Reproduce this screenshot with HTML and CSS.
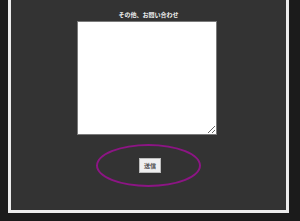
FILE: index.html
```html
<!DOCTYPE html>
<html lang="ja">
<head>
<meta charset="utf-8">
<link rel="stylesheet" href="styles.css">
</head>
<body>
<div class="panel">
  <h2 class="title">その他、お問い合わせ</h2>
  <textarea class="message"></textarea>
  <div class="highlight">
    <button class="send" type="button">送信</button>
  </div>
</div>
</body>
</html>
```

FILE: styles.css
```css
html, body {
  margin: 0;
  padding: 0;
}
body {
  background: #1b1b1b;
  padding: 0 11px 8px 8px;
  font-family: "Noto Sans CJK JP", "Noto Sans", sans-serif;
}
.panel {
  box-sizing: border-box;
  height: 213px;
  background: #333333;
  border: 3px solid #ececec;
  border-top: 0;
  display: flex;
  flex-direction: column;
  align-items: center;
}
.title {
  margin: 11px 0 0;
  font-size: 6px;
  line-height: 8px;
  font-weight: bold;
  color: #f2f2f2;
}
.message {
  display: block;
  box-sizing: border-box;
  width: 140px;
  height: 114px;
  margin: 2px 3px 0 0;
  border: 1px solid #7a7a7a;
  background: #ffffff;
  padding: 0;
}
.highlight {
  box-sizing: border-box;
  width: 105px;
  height: 43px;
  margin-top: 9px;
  border: 2px solid #8c1584;
  border-radius: 50%;
  display: flex;
  align-items: center;
  justify-content: center;
  padding-left: 3px;
}
.send {
  box-sizing: border-box;
  width: 22px;
  height: 15px;
  padding: 0;
  font-family: "Noto Sans CJK JP", sans-serif;
  font-size: 6px;
  font-weight: bold;
  color: #555;
  background: #efefef;
  border: 1px solid #bdbdbd;
  border-radius: 0;
}
```
